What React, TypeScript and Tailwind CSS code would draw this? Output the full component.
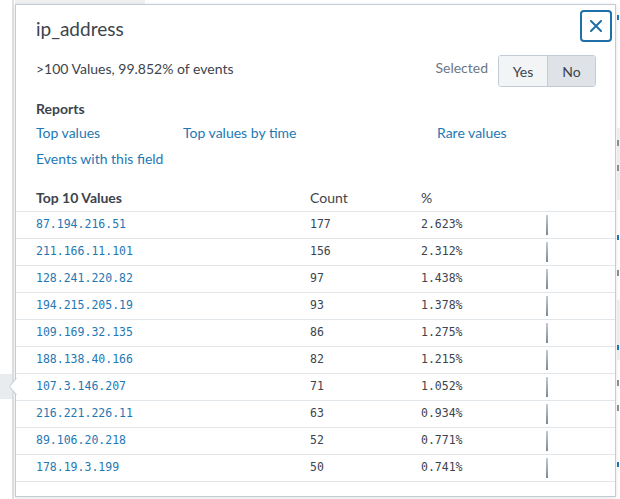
import React from "react";

const rows = [
  ["87.194.216.51", "177", "2.623%"],
  ["211.166.11.101", "156", "2.312%"],
  ["128.241.220.82", "97", "1.438%"],
  ["194.215.205.19", "93", "1.378%"],
  ["109.169.32.135", "86", "1.275%"],
  ["188.138.40.166", "82", "1.215%"],
  ["107.3.146.207", "71", "1.052%"],
  ["216.221.226.11", "63", "0.934%"],
  ["89.106.20.218", "52", "0.771%"],
  ["178.19.3.199", "50", "0.741%"],
];

const sans = "font-['Lato','Open_Sans',sans-serif]";
const mono = "font-['DejaVu_Sans_Mono',monospace]";

export default function App() {
  return (
    <div className={`relative w-[620px] h-[499px] overflow-hidden bg-white ${sans}`}>
      {/* background page fragments */}
      <div className="absolute left-[12px] top-0 w-[2px] h-[499px] bg-[#dfe3e7]" />
      <div className="absolute left-[15px] top-0 w-[130px] h-[4px] bg-[#eef0f2]" />
      <div className="absolute left-0 top-[374px] w-[12px] h-[25px] bg-[#e9ecef]" />
      <div className="absolute left-[617px] top-[128px] w-[3px] h-[72px] bg-[#eef0f2]" />
      <div className="absolute left-[617px] top-[300px] w-[3px] h-[60px] bg-[#eef0f2]" />
      <div className="absolute left-[617px] top-[15px] w-[2px] h-[5px] bg-[#1f78b4]" />
      <div className="absolute left-[617px] top-[235px] w-[2px] h-[5px] bg-[#1f78b4]" />
      <div className="absolute left-[617px] top-[345px] w-[2px] h-[5px] bg-[#1f78b4]" />
      <div className="absolute left-[617px] top-[462px] w-[2px] h-[5px] bg-[#1f78b4]" />
      <div className="absolute left-[617px] top-[140px] w-[2px] h-[6px] bg-[#8a939c]" />
      <div className="absolute left-[617px] top-[165px] w-[2px] h-[6px] bg-[#8a939c]" />
      <div className="absolute left-[617px] top-[270px] w-[2px] h-[6px] bg-[#8a939c]" />
      <div className="absolute left-[617px] top-[380px] w-[2px] h-[6px] bg-[#8a939c]" />
      <div className="absolute left-[617px] top-[405px] w-[2px] h-[6px] bg-[#8a939c]" />

      {/* popover */}
      <div className="absolute left-[15px] top-[4px] w-[601px] h-[493px] border border-[#c3cbd4] bg-white shadow-[0_1px_4px_rgba(0,0,0,0.12)]">
        <button className="absolute left-[564px] top-[5px] w-[32px] h-[32px] border-2 border-[#1f6fa8] rounded-[4px] flex items-center justify-center bg-white">
          <svg width="12" height="12" viewBox="0 0 12 12">
            <path d="M1 1 L11 11 M11 1 L1 11" stroke="#1f6fa8" strokeWidth="2" strokeLinecap="round" />
          </svg>
        </button>

        <div className="pl-5 pr-[19px] pt-[12px]">
          <div className="text-[19px] leading-[24px] text-[#3c444d]">ip_address</div>
          <div className="mt-[14px] flex items-start justify-between h-[32px]">
            <div className="mt-[6px] text-[14px] leading-[16px] text-[#3c444d]">&gt;100 Values, 99.852% of events</div>
            <div className="flex items-start">
              <span className="mt-[5px] mr-[10px] text-[14px] leading-[16px] text-[#6b7785]">Selected</span>
              <div className="flex h-[32px] border border-[#c3cbd4] rounded-[3px] overflow-hidden text-[14px] text-[#3c444d]">
                <div className="w-[49px] flex items-center justify-center bg-[#f2f4f5] border-r border-[#c3cbd4]">Yes</div>
                <div className="w-[47px] flex items-center justify-center bg-[#dfe3e7]">No</div>
              </div>
            </div>
          </div>
          <div className="mt-[13px] text-[14px] leading-[18px] font-bold text-[#3c444d]">Reports</div>
          <div className="mt-[6px] grid grid-cols-[147px_254px_1fr] gap-y-[8px] text-[14px] leading-[18px] text-[#1f78b4]">
            <span>Top values</span>
            <span>Top values by time</span>
            <span>Rare values</span>
            <span className="col-span-3">Events with this field</span>
          </div>
        </div>

        <div className="mt-[15px]">
          <div className="grid grid-cols-[274px_111px_125px_1fr] items-center h-[29px] pl-5 border-b border-[#e1e6eb] text-[14px] text-[#3c444d]">
            <span className="font-bold">Top 10 Values</span>
            <span>Count</span>
            <span>%</span>
            <span />
          </div>
          {rows.map(([ip, count, pct]) => (
            <div
              key={ip}
              className="grid grid-cols-[274px_111px_125px_1fr] items-center h-[27px] pl-5 border-b border-[#e1e6eb] text-[11.5px]"
            >
              <span className={`${mono} text-[#1f78b4]`}>{ip}</span>
              <span className={`${mono} text-[#3c444d]`}>{count}</span>
              <span className={`${mono} text-[#3c444d]`}>{pct}</span>
              <span className="flex items-center">
                <span className="block w-[2px] h-[20px] bg-gradient-to-b from-[#c3cbd4] to-[#7c8895]" />
              </span>
            </div>
          ))}
        </div>
      </div>

      {/* caret */}
      <svg className="absolute left-[8px] top-[378px]" width="10" height="17" viewBox="0 0 10 17">
        <path d="M9 0 L1.5 8.5 L9 17 Z" fill="#ffffff" />
        <path d="M8.5 0 L1.5 8.5 L8.5 17" fill="none" stroke="#c3cbd4" strokeWidth="1" />
      </svg>
      <div className="absolute left-[16px] top-[379px] w-[2px] h-[15px] bg-white" />
    </div>
  );
}
